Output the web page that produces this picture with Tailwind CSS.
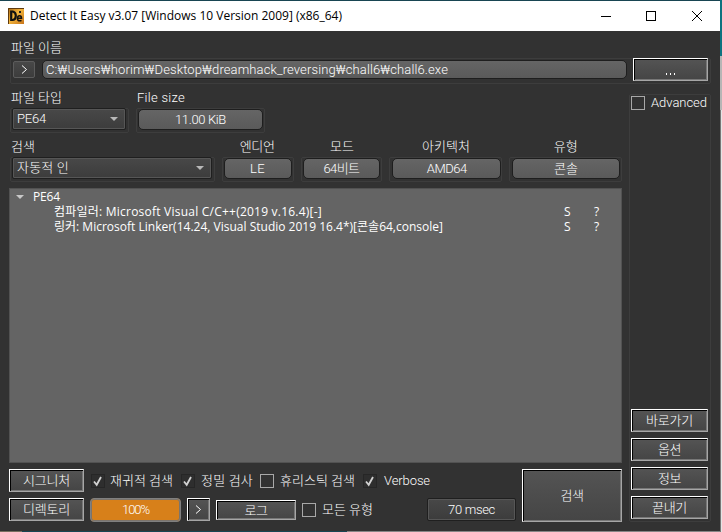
<!DOCTYPE html>
<html lang="ko">
<head>
<meta charset="utf-8">
<title>Detect It Easy</title>
<script src="https://cdn.jsdelivr.net/npm/@tailwindcss/browser@4"></script>
</head>
<body class="w-[722px] h-[532px] overflow-hidden bg-[#184552] text-white text-[13px] leading-4 font-light font-['Roboto','Noto_Sans_CJK_KR',sans-serif]">
<div class="flex w-[722px] h-[532px]">
  <div class="w-[720px] flex flex-col pt-px">
    <!-- title bar -->
    <header class="h-[30px] shrink-0 bg-white text-black flex items-center pl-2">
      <svg width="16" height="16" viewBox="0 0 16 16" class="shrink-0">
        <defs><linearGradient id="g" x1="0" y1="0" x2="1" y2="1"><stop offset="0" stop-color="#a96410"/><stop offset=".45" stop-color="#f2b53c"/><stop offset="1" stop-color="#c8741a"/></linearGradient></defs>
        <rect width="16" height="16" fill="url(#g)"/><path d="M.5 16V.5H16" stroke="#5e3a10" fill="none"/>
        <path d="M3.2 3.5V12h1.6q3-.5 3-4.2T4.8 3.5Z" fill="none" stroke="#111" stroke-width="2.2"/>
        <path d="M9.5 10.2h4q0-2.4-2-2.4T9.5 10.4q0 2.4 2.2 2.4 1 0 1.8-.5" fill="none" stroke="#111" stroke-width="1.5"/>
        <rect x="11" y="3" width="2" height="2" fill="#222"/>
      </svg>
      <span data-w="312" class="ml-[6px] whitespace-pre text-[12px] font-normal font-['Open_Sans',sans-serif]">Detect It Easy v3.07 [Windows 10 Version 2009] (x86_64)</span>
      <svg class="ml-auto mr-[16px] shrink-0" width="104" height="12" viewBox="0 0 104 12" fill="none" stroke="#000" shape-rendering="crispEdges">
        <path d="M1 6.5h10M46.5 1.5h9v9h-9z"/><path d="M92 1l10 10M102 1l-10 10" shape-rendering="auto"/>
      </svg>
    </header>

    <main class="h-[500px] shrink-0 bg-[#323232] pl-[9px] pt-[9px] flex flex-col">
      <div class="pl-[2px] h-[18px]"><span data-w="51">파일 이름</span></div>
      <div class="ml-px w-[701px] h-[26px] border border-[#3d3d3d] rounded-[2px] flex items-start">
        <button class="ml-[2px] mt-[2px] w-[22px] h-[17px] rounded-[2px] border border-[#5c5c5c] bg-linear-to-b from-[#484848] to-[#3c3c3c] grid place-items-center"><svg width="7" height="9" viewBox="0 0 7 9" fill="none" stroke="#fff"><path d="M1 .5 5.5 4.5 1 8.5"/></svg></button>
        <div class="ml-[7px] mt-px w-[585px] h-[19px] rounded-[5px] border border-[#1e1e1e] bg-linear-to-b from-[#656565] to-[#5a5a5a] pl-[3px] flex items-center"><span data-w="402" class="whitespace-pre">C:₩Users₩horim₩Desktop₩dreamhack_reversing₩chall6₩chall6.exe</span></div>
        <button class="ml-[6px] -mt-px w-[75px] h-[23px] bg-linear-to-b from-[#545454] to-[#454545] border border-t-white border-l-white border-r-[#a6a6a6] border-b-[#a6a6a6] shadow-[inset_1px_1px_#000,inset_-1px_-1px_#777] flex items-center justify-center"><svg width="10" height="2" viewBox="0 0 10 2" class="mt-[8px]" fill="#fff"><path d="M0 0h1v2H0zM4 0h1v2H4zM8 0h1v2H8z"/></svg></button>
      </div>

      <div class="flex mt-[6px]">
        <section class="w-[613px]">
          <div class="h-[18px] flex pl-[2px]"><span class="w-[126px]"><span data-w="51">파일 타입</span></span><span data-w="48">File size</span></div>
          <div class="flex gap-[7px] pl-px">
            <div class="w-[119px] h-[25px] border border-[#3d3d3d] rounded-[2px] pl-px"><div class="-mt-px w-[114px] h-[22px] rounded-[2px] border border-[#1f1f1f] shadow-[inset_0_0_0_1px_#565656] bg-linear-to-b from-[#484848] to-[#3c3c3c] flex items-center justify-between pl-[4px] pr-[7px]"><span data-w="29">PE64</span><i class="border-x-4 border-x-transparent border-t-4 border-t-[#b8b8b8]"></i></div></div>
            <div class="w-[129px] h-[25px] border border-[#3d3d3d] rounded-[2px] pl-px"><div class="mt-0 w-[125px] h-[21px] rounded-[5px] border border-[#1e1e1e] bg-linear-to-b from-[#656565] to-[#5a5a5a] flex items-center justify-center"><span data-w="51">11.00 KiB</span></div></div>
          </div>
          <div class="mt-[6px] h-[18px] flex text-center"><span class="w-[213px] text-left pl-[2px]"><span data-w="24">검색</span></span><span class="w-[72px]"><span data-w="35">엔디언</span></span><span class="ml-[8px] w-[82px]"><span data-w="24">모드</span></span><span class="ml-[7px] w-[113px]"><span data-w="48">아키텍처</span></span><span class="ml-[7px] w-[113px]"><span data-w="24">유형</span></span></div>
          <div class="flex pl-px">
            <div class="w-[205px] h-[25px] border border-[#3d3d3d] rounded-[2px] pl-px"><div class="-mt-px w-[200px] h-[22px] rounded-[2px] border border-[#1f1f1f] shadow-[inset_0_0_0_1px_#565656] bg-linear-to-b from-[#484848] to-[#3c3c3c] flex items-center justify-between pl-[4px] pr-[7px]"><span data-w="52">자동적 인</span><i class="border-x-4 border-x-transparent border-t-4 border-t-[#b8b8b8]"></i></div></div>
            <div class="ml-[7px] w-[72px] h-[25px] border border-[#3d3d3d] rounded-[2px] px-px"><div class="h-[21px] rounded-[5px] border border-[#1e1e1e] bg-linear-to-b from-[#656565] to-[#5a5a5a] flex items-center justify-center"><span data-w="15">LE</span></div></div>
            <div class="ml-[7px] w-[82px] h-[25px] border border-[#3d3d3d] rounded-[2px] px-px"><div class="h-[21px] rounded-[5px] border border-[#1e1e1e] bg-linear-to-b from-[#656565] to-[#5a5a5a] flex items-center justify-center"><span data-w="36">64비트</span></div></div>
            <div class="ml-[7px] w-[113px] h-[25px] border border-[#3d3d3d] rounded-[2px] pl-[2px]"><div class="h-[21px] rounded-[5px] border border-[#1e1e1e] bg-linear-to-b from-[#656565] to-[#5a5a5a] flex items-center justify-center"><span data-w="40">AMD64</span></div></div>
            <div class="ml-[7px] w-[113px] h-[25px] border border-[#3d3d3d] rounded-[2px] pl-[2px] pr-px"><div class="h-[21px] rounded-[5px] border border-[#1e1e1e] bg-linear-to-b from-[#656565] to-[#5a5a5a] flex items-center justify-center"><span data-w="24">콘솔</span></div></div>
          </div>

          <!-- result tree -->
          <div class="mt-[6px] h-[275px] bg-[#646464] border border-[#525252] text-[12px] font-normal leading-[15px] font-['Open_Sans','Noto_Sans_CJK_KR',sans-serif]">
            <div class="h-[15px] flex items-center pl-[6px]"><i class="border-x-4 border-x-transparent border-t-4 border-t-[#c8c8c8]"></i><span class="ml-[9px]" data-w="27">PE64</span></div>
            <div class="h-[15px] flex pl-[44px]"><span class="w-[510px]"><span data-w="268">컴파일러: Microsoft Visual C/C++(2019 v.16.4)[-]</span></span><span class="w-[30px]">S</span><span>?</span></div>
            <div class="h-[15px] flex pl-[44px]"><span class="w-[510px]"><span data-w="389">링커: Microsoft Linker(14.24, Visual Studio 2019 16.4*)[콘솔64,console]</span></span><span class="w-[30px]">S</span><span>?</span></div>
          </div>

          <div class="mt-[6px] flex justify-between">
            <div class="w-[507px]">
              <div class="h-[23px] flex items-center">
                <button class="w-[75px] h-[23px] bg-linear-to-b from-[#545454] to-[#454545] border border-t-white border-l-white border-r-[#a6a6a6] border-b-[#a6a6a6] shadow-[inset_1px_1px_#000,inset_-1px_-1px_#777]"><span data-w="47">시그니처</span></button>
                <svg class="ml-[7px] mr-[5px] shrink-0" width="14" height="14" viewBox="0 0 14 14"><rect x=".5" y=".5" width="13" height="13" fill="#2e2e2e" stroke="#262626"/><path d="M3 7.5 5.7 10.8 10 3" fill="none" stroke="#d2d2d2" stroke-width="1.8"/></svg><span data-w="63">재귀적 검색</span>
                <svg class="ml-[8px] mr-[6px] shrink-0" width="14" height="14" viewBox="0 0 14 14"><rect x=".5" y=".5" width="13" height="13" fill="#2e2e2e" stroke="#262626"/><path d="M3 7.5 5.7 10.8 10 3" fill="none" stroke="#d2d2d2" stroke-width="1.8"/></svg><span data-w="52">정밀 검사</span>
                <i class="ml-[7px] mr-[6px] w-[14px] h-[14px] border border-[#a8a8a8]"></i><span data-w="75">휴리스틱 검색</span>
                <svg class="ml-[8px] mr-[7px] shrink-0" width="14" height="14" viewBox="0 0 14 14"><rect x=".5" y=".5" width="13" height="13" fill="#2e2e2e" stroke="#262626"/><path d="M3 7.5 5.7 10.8 10 3" fill="none" stroke="#d2d2d2" stroke-width="1.8"/></svg><span data-w="46">Verbose</span>
              </div>
              <div class="mt-[6px] h-[24px] flex items-start">
                <button class="w-[75px] h-[23px] bg-linear-to-b from-[#545454] to-[#454545] border border-t-white border-l-white border-r-[#a6a6a6] border-b-[#a6a6a6] shadow-[inset_1px_1px_#000,inset_-1px_-1px_#777]"><span data-w="47">디렉토리</span></button>
                <div class="ml-[6px] w-[91px] h-[24px] rounded-[4px] border border-[#808080] shadow-[inset_0_0_0_1px_#7b746c] bg-[#d7801a] flex items-center justify-center"><span data-w="27">100%</span></div>
                <button class="ml-[6px] w-[23px] h-[23px] bg-linear-to-b from-[#545454] to-[#454545] border border-t-white border-l-white border-r-[#a6a6a6] border-b-[#a6a6a6] shadow-[inset_1px_1px_#000,inset_-1px_-1px_#777] grid place-items-center"><svg width="7" height="9" viewBox="0 0 7 9" fill="none" stroke="#fff"><path d="M1 .5 5.5 4.5 1 8.5"/></svg></button>
                <button class="ml-[6px] mt-[2px] w-[80px] h-[20px] bg-linear-to-b from-[#545454] to-[#454545] border border-t-white border-l-white border-r-[#a6a6a6] border-b-[#a6a6a6] shadow-[inset_1px_1px_#000,inset_-1px_-1px_#777] leading-none"><span data-w="23">로그</span></button>
                <i class="ml-[6px] mr-[6px] mt-[5px] w-[14px] h-[14px] border border-[#a8a8a8]"></i><span class="mt-[4px]" data-w="51">모든 유형</span>
                <button class="ml-auto w-[89px] h-[23px] rounded-[2px] border border-[#1f1f1f] shadow-[inset_0_0_0_1px_#565656] bg-linear-to-b from-[#484848] to-[#3c3c3c]"><span data-w="47">70 msec</span></button>
              </div>
            </div>
            <button class="w-[100px] h-[53px] bg-linear-to-b from-[#545454] to-[#454545] border border-t-white border-l-white border-r-[#a6a6a6] border-b-[#a6a6a6] shadow-[inset_1px_1px_#000,inset_-1px_-1px_#777]"><span data-w="23">검색</span></button>
          </div>
        </section>

        <aside class="ml-[7px] mt-[4px] w-[82px] h-[428px] border border-[#3d3d3d] rounded-[2px] p-px pb-[2px] flex flex-col">
          <div class="flex"><i class="w-[14px] h-[14px] border border-[#a8a8a8]"></i><span class="ml-[6px] -mt-px" data-w="56">Advanced</span></div>
          <div class="mt-auto flex flex-col gap-[6px]">
            <button class="w-[77px] h-[23px] bg-linear-to-b from-[#545454] to-[#454545] border border-t-white border-l-white border-r-[#a6a6a6] border-b-[#a6a6a6] shadow-[inset_1px_1px_#000,inset_-1px_-1px_#777]"><span data-w="47">바로가기</span></button>
            <button class="w-[77px] h-[23px] bg-linear-to-b from-[#545454] to-[#454545] border border-t-white border-l-white border-r-[#a6a6a6] border-b-[#a6a6a6] shadow-[inset_1px_1px_#000,inset_-1px_-1px_#777]"><span data-w="23">옵션</span></button>
            <button class="w-[77px] h-[23px] bg-linear-to-b from-[#545454] to-[#454545] border border-t-white border-l-white border-r-[#a6a6a6] border-b-[#a6a6a6] shadow-[inset_1px_1px_#000,inset_-1px_-1px_#777]"><span data-w="23">정보</span></button>
            <button class="w-[77px] h-[23px] bg-linear-to-b from-[#545454] to-[#454545] border border-t-white border-l-white border-r-[#a6a6a6] border-b-[#a6a6a6] shadow-[inset_1px_1px_#000,inset_-1px_-1px_#777]"><span data-w="35">끝내기</span></button>
          </div>
        </aside>
      </div>
    </main>
    <div class="h-px shrink-0 flex"><i class="w-[22px] bg-[#766f60]"></i><i class="w-[325px] bg-[#184552]"></i><i class="grow bg-[#858585]"></i></div>
  </div>
  <!-- desktop edge beside the window -->
  <div class="w-[2px] flex flex-col"><i class="h-[56px] bg-[#0d7380]"></i><i class="h-[54px] bg-[#b5b5b5]"></i><i class="grow border-l border-[#777] bg-[#e4e4e4]"></i></div>
</div>
<script>
// Spread each label's letters so that it fills its nominal width.
function fitLabels() {
  document.querySelectorAll('[data-w]').forEach(e => {
    e.style.display = 'inline-block';
    e.style.whiteSpace = 'pre';
    e.style.flexShrink = 0;
    e.style.letterSpacing = '0px';
    const n = [...e.textContent].length;
    e.style.letterSpacing = ((+e.dataset.w - e.getBoundingClientRect().width) / n) + 'px';
  });
}
window.addEventListener('load', () => { fitLabels(); requestAnimationFrame(fitLabels); document.fonts.ready.then(fitLabels); });
</script>
</body>
</html>
